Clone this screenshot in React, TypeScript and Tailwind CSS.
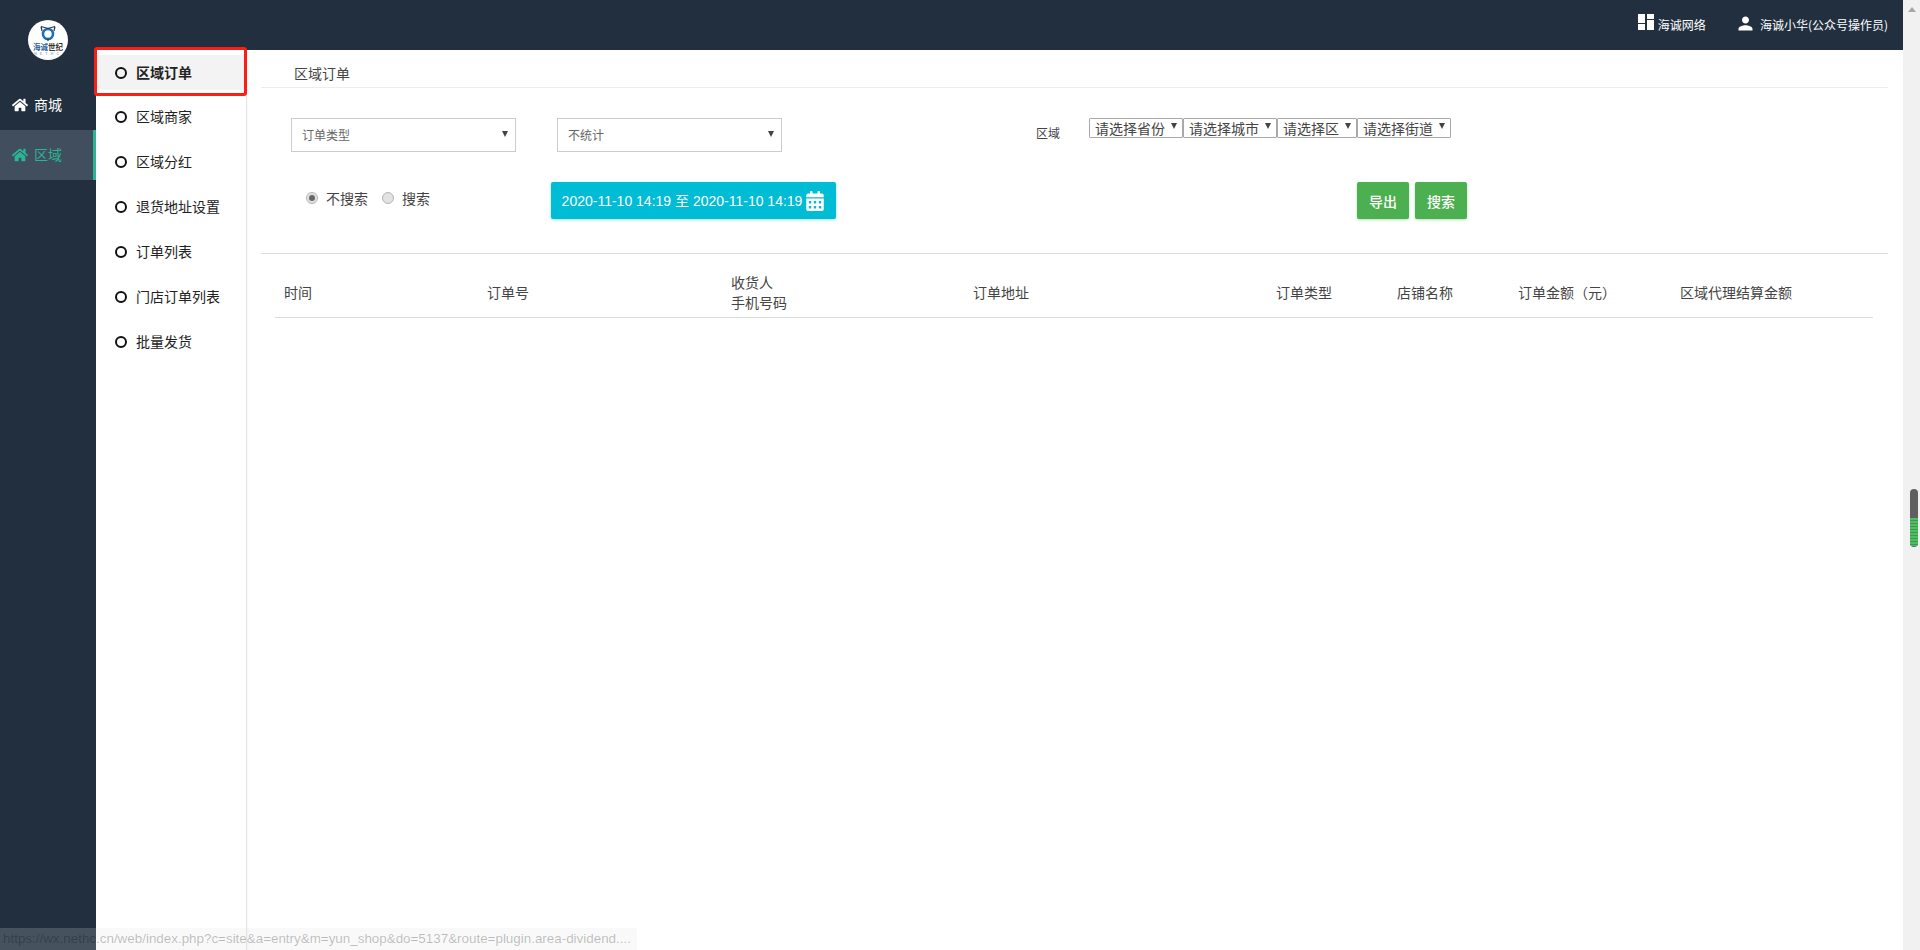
import { FaCalendarAlt, FaHome } from "react-icons/fa";
import { MdPerson } from "react-icons/md";

const subMenus = ["区域订单", "区域商家", "区域分红", "退货地址设置", "订单列表", "门店订单列表", "批量发货"];

const regionSelects = [
  { label: "请选择省份", width: "w-[94px]" },
  { label: "请选择城市", width: "w-[94px]" },
  { label: "请选择区", width: "w-[80px]" },
  { label: "请选择街道", width: "w-[94px]" },
];

const columns = [
  { label: "时间", width: "w-[203px]" },
  { label: "订单号", width: "w-[244px]" },
  { label: "收货人", second: "手机号码", width: "w-[242px]" },
  { label: "订单地址", width: "w-[303px]" },
  { label: "订单类型", width: "w-[121px]" },
  { label: "店铺名称", width: "w-[121px]" },
  { label: "订单金额（元）", width: "w-[162px]" },
  { label: "区域代理结算金额", width: "w-[120px]" },
];

const Caret = ({ className }: { className: string }) => (
  <svg viewBox="0 0 8 8" className={className} fill="#444">
    <path d="M0 0h8L4 8z" />
  </svg>
);

const Logo = () => (
  <div className="size-10 rounded-full bg-white flex flex-col items-center pt-[5px] overflow-hidden">
    <svg viewBox="0 0 18 17" className="w-[18px] h-[17px] shrink-0" fill="none">
      <circle cx="9" cy="9" r="5" stroke="#1d6fb8" strokeWidth="2.600" />
      <path d="M2 1.500 9 3.500l7-2M3 6 2 1.500M15 6l1-4.500M9 16v-2.500" stroke="#27384a" strokeWidth="1.200" />
    </svg>
    <span className="mt-[1px] text-[7.5px] leading-[8px] font-bold whitespace-nowrap">
      <span className="text-[#2a5f9e]">海诚</span>
      <span className="text-[#333]">世纪</span>
    </span>
    <span className="text-[4px] leading-[4px] tracking-[3px] text-[#4a90c8]">NETHC</span>
  </div>
);

const Radio = ({ checked, className }: { checked?: boolean; className: string }) => (
  <span className={`${className} size-[12px] rounded-full border border-[#b5b5b5] bg-[#e2e2e2] flex items-center justify-center`}>
    {checked && <span className="size-[6px] rounded-full bg-[#666]" />}
  </span>
);

export default function App() {
  return (
    <div className="relative flex h-[950px] w-[1920px] overflow-hidden bg-white font-['Noto_Sans_CJK_SC','Liberation_Sans',sans-serif] text-sm text-[#444]">
      {/* 一级菜单 */}
      <aside className="w-[96px] shrink-0 bg-[#212f3f] flex flex-col">
        <div className="h-[85px] flex justify-center pt-[20px]">
          <Logo />
        </div>
        <div className="h-[40px] mb-[5px] flex items-center gap-[6px] pl-[12px] text-white">
          <FaHome size={16} />
          <span className="-mt-[2px]">商城</span>
        </div>
        <div className="h-[50px] flex items-center gap-[6px] pl-[12px] bg-[#404e5d] border-r-[3px] border-[#2bb594] text-[#2bb594]">
          <FaHome size={16} />
          <span className="-mt-[2px]">区域</span>
        </div>
      </aside>

      <div className="flex-1 min-w-0 flex flex-col">
        <header className="h-[50px] shrink-0 bg-[#212f3f] flex justify-end items-center gap-[29px] pr-[15px] text-white text-xs">
          <div className="flex items-center gap-[4px]">
            <svg viewBox="0 0 16 16" className="size-[16px] -mt-[6px]" fill="white">
              <path d="M0 0h7v9H0zM9 0h7v5H9zM0 10h7v6H0zM9 6h7v10H9z" />
            </svg>
            海诚网络
          </div>
          <div className="flex items-center gap-[4px]">
            <MdPerson size={21} className="-mt-[4px]" />
            海诚小华(公众号操作员)
          </div>
        </header>

        <div className="flex-1 min-h-0 flex">
          {/* 二级菜单 */}
          <nav className="w-[151px] shrink-0 border-r border-[#e5e5e5] pt-[5px] shadow-[1px_0_2px_rgba(0,0,0,0.04)]">
            {subMenus.map((name, i) => (
              <div
                key={name}
                className={`flex items-center gap-[9px] pl-[19px] text-[#222] ${i === 0 ? "h-[35px] mb-[9px] bg-[#f3f3f3] font-bold" : "h-[36px] mb-[9px]"}`}
              >
                <span className="size-[12px] rounded-full border-2 border-[#111]" />
                <span className="-mt-[2px]">{name}</span>
              </div>
            ))}
          </nav>

          <main className="flex-1 min-w-0 pl-[14px] pr-[15px]">
            <div className="h-[38px] flex items-center pl-[33px] pt-[8px] border-b border-[#ececec]">区域订单</div>

            <div className="h-[166px] border-b border-[#ddd] pl-[30px] pt-[30px]">
              <div className="flex h-[34px]">
                <div className="w-[225px] flex items-center justify-between border border-[#ccc] pl-[10px] pr-[7px] text-xs text-[#666]">
                  订单类型
                  <Caret className="size-[6px] -mt-[2px]" />
                </div>
                <div className="w-[225px] ml-[41px] flex items-center justify-between border border-[#ccc] pl-[10px] pr-[7px] text-xs text-[#666]">
                  不统计
                  <Caret className="size-[6px] -mt-[2px]" />
                </div>
                <span className="ml-[254px] mt-[7px] text-xs">区域</span>
                <div className="ml-[29px] flex items-start">
                  {regionSelects.map((s) => (
                    <div
                      key={s.label}
                      className={`${s.width} h-[20px] flex items-center justify-between border border-[#a9a9a9] rounded-[1px] pl-[5px] pr-[5px] leading-none text-[#444]`}
                    >
                      {s.label}
                      <Caret className="size-[6px] -mt-[4px]" />
                    </div>
                  ))}
                </div>
              </div>

              <div className="flex mt-[30px] h-[37px]">
                <div className="w-[260px] h-[32px] pl-[15px] flex items-center">
                  <Radio checked className="mr-[8px]" />
                  <span className="mr-[14px] -mt-[1px]">不搜索</span>
                  <Radio className="mr-[8px]" />
                  <span className="-mt-[1px]">搜索</span>
                </div>
                <div className="w-[285px] flex items-center justify-center gap-[3px] rounded-[2px] bg-[#00bcd4] text-white font-['Liberation_Sans','Noto_Sans_CJK_SC',sans-serif] shadow-[0_1px_3px_rgba(0,188,212,0.4)]">
                  2020-11-10 14:19 至 2020-11-10 14:19
                  <FaCalendarAlt size={20} />
                </div>
                <button className="w-[52px] ml-[521px] rounded-[2px] bg-[#4caf50] text-white font-medium shadow-[0_1px_3px_rgba(76,175,80,0.4)]">导出</button>
                <button className="w-[52px] ml-[6px] rounded-[2px] bg-[#4caf50] text-white font-medium shadow-[0_1px_3px_rgba(76,175,80,0.4)]">搜索</button>
              </div>
            </div>

            <div className="ml-[14px] mr-[15px] h-[64px] flex items-center border-b border-[#ddd] pl-[9px] pt-[13px]">
              {columns.map((c) => (
                <div key={c.label} className={`${c.width} shrink-0 leading-[20px] whitespace-nowrap`}>
                  <div>{c.label}</div>
                  {c.second && <div>{c.second}</div>}
                </div>
              ))}
            </div>
          </main>
        </div>
      </div>

      {/* 滚动条 */}
      <div className="w-[17px] shrink-0 bg-[#f1f1f1] flex flex-col pt-[7px]">
        <div className="self-center size-0 border-x-[4px] border-b-[5px] border-x-transparent border-b-[#a8a8a8]" />
        <div className="relative self-end mr-[2px] mt-[477px] w-[8px] h-[58px] rounded-[4px] bg-[#5f5f5f] overflow-hidden">
          <div className="absolute left-0 right-0 top-[29px] bottom-[1px] bg-[repeating-linear-gradient(to_bottom,#46c35f_0,#46c35f_2px,#4f8f59_2px,#4f8f59_3px)]" />
        </div>
      </div>

      {/* 红色标注框 */}
      <div className="absolute left-[94px] top-[47px] w-[153px] h-[49px] border-[3px] border-[#fb1e14] rounded-[3px]" />

      {/* 状态栏 */}
      <div className="absolute left-0 bottom-0 w-[637px] h-[22px] flex items-center pl-[3px] bg-[#e0e0e0]/20 rounded-tr-[2px] text-[13.4px] text-black/25 font-['Liberation_Sans',sans-serif] whitespace-nowrap">
        https://wx.nethc.cn/web/index.php?c=site&amp;a=entry&amp;m=yun_shop&amp;do=5137&amp;route=plugin.area-dividend....
      </div>
    </div>
  );
}
